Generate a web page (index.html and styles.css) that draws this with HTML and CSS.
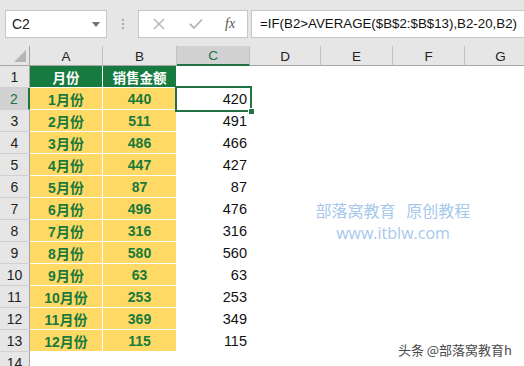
FILE: index.html
```html
<!DOCTYPE html>
<html lang="zh-CN">
<head>
<meta charset="utf-8">
<link rel="stylesheet" href="styles.css">
</head>
<body>
<div class="app">
  <div class="toolbar">
    <div class="namebox"><span class="nb-text">C2</span><span class="nb-arrow"></span></div>
    <div class="grip"><i></i><i></i><i></i></div>
    <div class="fbtns">
      <svg class="ico" width="12" height="12" viewBox="0 0 12 12"><path d="M1 1L11 11M11 1L1 11" stroke="#b3b3b3" stroke-width="1.4" fill="none"/></svg>
      <svg class="ico" width="14" height="12" viewBox="0 0 14 12"><path d="M1 6L5 10L13 1.5" stroke="#b3b3b3" stroke-width="1.8" fill="none"/></svg>
      <span class="fx">fx</span>
    </div>
    <div class="formula">=IF(B2&gt;AVERAGE($B$2:$B$13),B2-20,B2)</div>
  </div>
  <div class="sheet">
    <div class="corner"><span class="tri"></span></div>
    <div class="ch">A</div><div class="ch">B</div><div class="ch sel">C</div><div class="ch">D</div><div class="ch">E</div><div class="ch">F</div><div class="ch">G</div>

    <div class="rh">1</div><div class="c hd">月份</div><div class="c hd">销售金额</div><div class="c"></div><div class="c"></div><div class="c"></div><div class="c"></div><div class="c"></div>
    <div class="rh sel">2</div><div class="c y">1月份</div><div class="c y">440</div><div class="c n">420</div><div class="c"></div><div class="c"></div><div class="c"></div><div class="c"></div>
    <div class="rh">3</div><div class="c y">2月份</div><div class="c y">511</div><div class="c n">491</div><div class="c"></div><div class="c"></div><div class="c"></div><div class="c"></div>
    <div class="rh">4</div><div class="c y">3月份</div><div class="c y">486</div><div class="c n">466</div><div class="c"></div><div class="c"></div><div class="c"></div><div class="c"></div>
    <div class="rh">5</div><div class="c y">4月份</div><div class="c y">447</div><div class="c n">427</div><div class="c"></div><div class="c"></div><div class="c"></div><div class="c"></div>
    <div class="rh">6</div><div class="c y">5月份</div><div class="c y">87</div><div class="c n">87</div><div class="c"></div><div class="c"></div><div class="c"></div><div class="c"></div>
    <div class="rh">7</div><div class="c y">6月份</div><div class="c y">496</div><div class="c n">476</div><div class="c"></div><div class="c"></div><div class="c"></div><div class="c"></div>
    <div class="rh">8</div><div class="c y">7月份</div><div class="c y">316</div><div class="c n">316</div><div class="c"></div><div class="c"></div><div class="c"></div><div class="c"></div>
    <div class="rh">9</div><div class="c y">8月份</div><div class="c y">580</div><div class="c n">560</div><div class="c"></div><div class="c"></div><div class="c"></div><div class="c"></div>
    <div class="rh">10</div><div class="c y">9月份</div><div class="c y">63</div><div class="c n">63</div><div class="c"></div><div class="c"></div><div class="c"></div><div class="c"></div>
    <div class="rh">11</div><div class="c y">10月份</div><div class="c y">253</div><div class="c n">253</div><div class="c"></div><div class="c"></div><div class="c"></div><div class="c"></div>
    <div class="rh">12</div><div class="c y">11月份</div><div class="c y">369</div><div class="c n">349</div><div class="c"></div><div class="c"></div><div class="c"></div><div class="c"></div>
    <div class="rh">13</div><div class="c y">12月份</div><div class="c y">115</div><div class="c n">115</div><div class="c"></div><div class="c"></div><div class="c"></div><div class="c"></div>
    <div class="rh">14</div><div class="c"></div><div class="c"></div><div class="c"></div><div class="c"></div><div class="c"></div><div class="c"></div><div class="c"></div>

    <div class="selbox"><span class="handle"></span></div>
  </div>
  <div class="watermark">
    <div class="wm1">部落窝教育&nbsp;&nbsp;&nbsp;原创教程</div>
    <div class="wm2">www.itblw.com</div>
  </div>
  <div class="credit">头条 @部落窝教育h</div>
</div>
</body>
</html>
```

FILE: styles.css
```css
* { box-sizing: border-box; }
html, body { margin: 0; padding: 0; }
body { width: 524px; height: 366px; overflow: hidden; background: #fff; font-family: "Liberation Sans", "Noto Sans CJK SC", sans-serif; }
.app { position: relative; width: 524px; height: 366px; overflow: hidden; }

.toolbar { height: 46px; background: #e6e6e6; display: flex; align-items: flex-start; padding-top: 10px; padding-left: 5px; }
.namebox { width: 102px; height: 28px; background: #fff; border: 1px solid #c6c6c6; display: flex; align-items: center; justify-content: space-between; padding: 0 6px 0 6px; }
.nb-text { font-size: 14px; color: #222; }
.nb-arrow { width: 0; height: 0; border-left: 4px solid transparent; border-right: 4px solid transparent; border-top: 5px solid #707070; }
.grip { width: 31px; height: 28px; display: flex; flex-direction: column; align-items: center; justify-content: center; gap: 2px; }
.grip i { display: block; width: 2px; height: 2px; background: #a8a8a8; }
.fbtns { width: 110px; height: 28px; background: #fff; border: 1px solid #c6c6c6; display: flex; align-items: center; padding-left: 14px; }
.fbtns .ico { display: block; }
.fbtns .ico + .ico { margin-left: 24px; }
.fx { font-family: "Liberation Serif", serif; font-style: italic; font-size: 14px; color: #555; margin-left: 22px; }
.formula { margin-left: 3px; flex: 1; height: 28px; background: #fff; border: 1px solid #c6c6c6; border-right: none; font-size: 13.3px; color: #111; padding-left: 8px; line-height: 26px; white-space: nowrap; }

.sheet { position: relative; display: grid; grid-template-columns: 30px 73px 74px 73px 71px 72px 72px 72px; grid-template-rows: 20px repeat(14, 22px); }
.corner { background: #e6e6e6; border-right: 1px solid #a6a6a6; border-bottom: 1px solid #a6a6a6; position: relative; }
.tri { position: absolute; right: 3px; bottom: 3px; width: 0; height: 0; border-left: 12px solid transparent; border-bottom: 12px solid #b4b4b4; }
.ch { background: #e6e6e6; border-right: 1px solid #c2c2c2; border-bottom: 1px solid #a6a6a6; font-size: 13.5px; color: #222; display: flex; align-items: center; justify-content: center; padding-top: 1px; }
.ch.sel { background: #d2d2d2; color: #217346; border-bottom: 2px solid #217346; }
.rh { background: #e6e6e6; border-right: 1px solid #a6a6a6; border-bottom: 1px solid #d0d0d0; font-size: 14px; color: #222; display: flex; align-items: center; justify-content: center; }
.rh.sel { background: #d2d2d2; color: #217346; border-right: 2px solid #217346; }
.c { border-right: 1px solid #fff; border-bottom: 1px solid #fff; display: flex; align-items: center; justify-content: center; font-size: 14px; }
.c.hd { background: #177a3f; color: #fff; font-weight: bold; font-size: 13.5px; }
.c.y { background: #ffd966; color: #18793c; font-weight: bold; }
.c.n { justify-content: flex-end; padding-right: 2px; font-size: 14.5px; color: #111; }

.selbox { position: absolute; left: 175px; top: 40px; width: 77px; height: 26px; border: 2px solid #217346; pointer-events: none; }
.handle { position: absolute; right: -5px; bottom: -5px; width: 7px; height: 7px; background: #217346; border: 1px solid #fff; }

.watermark { position: absolute; left: 298px; top: 199px; width: 190px; text-align: center; color: #a6c8eb; }
.wm1 { font-family: "Noto Sans CJK SC", sans-serif; font-size: 16px; line-height: 23px; }
.wm2 { font-family: "Open Sans", "Liberation Sans", sans-serif; font-size: 16px; line-height: 22px; }
.credit { position: absolute; right: 12px; top: 340px; font-family: "Noto Sans CJK SC", sans-serif; font-size: 13px; color: #4a4a4a; text-shadow: 0 0 2px #fff; }
```
